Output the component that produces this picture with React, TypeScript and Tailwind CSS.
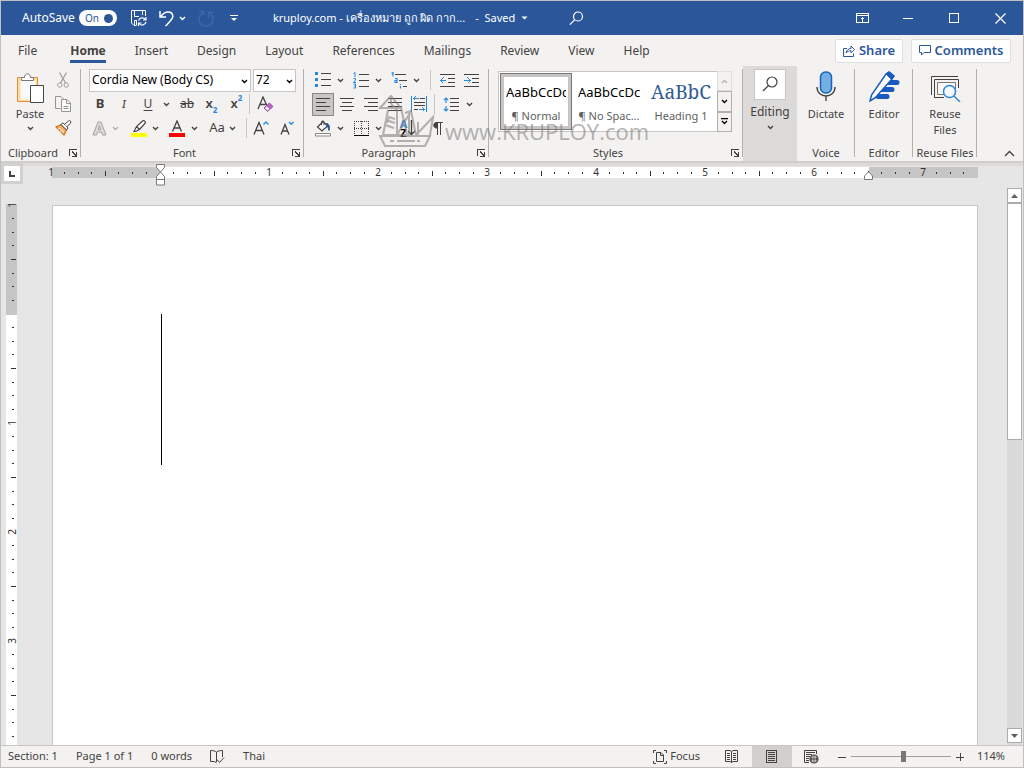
import { ReactNode } from "react";

interface IconProps {
    w: number;
    h: number;
    children: ReactNode;
    crisp?: boolean;
    className?: string;
}

function Icon({ w, h, children, crisp = false, className = "" }: IconProps) {
    return (
        <svg
            width={w}
            height={h}
            viewBox={`0 0 ${w} ${h}`}
            fill="none"
            stroke="currentColor"
            shapeRendering={crisp ? "crispEdges" : "auto"}
            className={`shrink-0 ${className}`}
            aria-hidden="true"
        >
            {children}
        </svg>
    );
}

function Chevron({ className = "" }: { className?: string }) {
    return (
        <Icon w={7} h={5} className={className}>
            <path d="M1 1l2.5 2.5L6 1" strokeWidth="1.4" />
        </Icon>
    );
}

interface ToolProps {
    label: string;
    children: ReactNode;
    className?: string;
}

function Tool({ label, children, className = "w-6" }: ToolProps) {
    return (
        <button type="button" aria-label={label} className={`flex h-6 shrink-0 items-center justify-center ${className}`}>
            {children}
        </button>
    );
}

function MoreButton({ label, className = "w-3" }: { label: string; className?: string }) {
    return (
        <Tool label={label} className={className}>
            <Chevron />
        </Tool>
    );
}

function Divider({ className = "" }: { className?: string }) {
    return <span className={`h-5 w-px shrink-0 bg-[#c8c6c4] ${className}`} />;
}

interface GroupProps {
    title: string;
    children: ReactNode;
    launcher?: boolean;
    className?: string;
}

function Group({ title, children, launcher = false, className = "" }: GroupProps) {
    return (
        <section className={`relative flex shrink-0 flex-col pt-[2px] ${className}`}>
            <div className="h-[72px]">{children}</div>
            <div className="flex h-[21px] items-end">
                <h2 className={`flex-1 whitespace-nowrap text-center leading-4 ${launcher ? "pr-1" : ""}`}>{title}</h2>
                {launcher && (
                    <button type="button" aria-label={`${title} options`} className="mb-1 mr-[3px]">
                        <Icon w={9} h={8} crisp>
                            <path d="M0.5 7V0.5H8M3 2.5l4 4M7.5 3v4.5H3" />
                        </Icon>
                    </button>
                )}
            </div>
            <span className="absolute bottom-1 right-0 top-[3px] w-px bg-[#b3b0ad]" />
        </section>
    );
}

const tabs = ["File", "Home", "Insert", "Design", "Layout", "References", "Mailings", "Review", "View", "Help"];

function TitleBar() {
    return (
        <header className="flex h-[34px] shrink-0 items-center bg-[#2b579a] text-white">
            <div className="flex items-center pl-[21px]">
                <span id="autosave" className="text-[12px]">AutoSave</span>
                <button
                    type="button"
                    role="switch"
                    aria-checked="true"
                    aria-labelledby="autosave"
                    className="ml-1 flex h-4 w-[38px] items-center justify-between rounded-full bg-white pl-[6px] pr-1 text-[10px] leading-4 text-[#2b579a]"
                >
                    On
                    <span className="size-[9px] rounded-full bg-[#2b579a]" />
                </button>
                <Tool label="Save" className="ml-3 w-5">
                    <Icon w={16} h={17}>
                        <path d="M5.5 15.5H3L0.5 13V0.5H14.5V6" />
                        <path d="M3.5 0.5V6.5H8M11.5 0.5V5M3.5 15V10.5H6M5.5 11V15" />
                        <path d="M7.5 10.5A4 4 0 0 1 14.5 9.5M15 7V10H12M15 12A4 4 0 0 1 8 13.5M7.5 16V13H10.5" strokeWidth="1.2" />
                    </Icon>
                </Tool>
                <Tool label="Undo" className="ml-2 w-5">
                    <Icon w={15} h={17}>
                        <path d="M1 1V7H7M1.5 6.5C4 3.5 6.5 2 9 2C12 2 13.8 4 13.8 6.5C13.8 9 12 10.5 6.5 16" strokeWidth="1.5" />
                    </Icon>
                </Tool>
                <MoreButton label="Undo history" />
                <Tool label="Redo" className="ml-[7px] w-5 text-[#4468a5]">
                    <Icon w={16} h={17}>
                        <path d="M5 3A7 7 0 1 0 11 3M10.5 7.5V2.5H15.5M1.5 1.5H5.5V5" strokeWidth="1.3" />
                    </Icon>
                </Tool>
                <Tool label="Customize toolbar" className="ml-2 w-5">
                    <Icon w={8} h={7}>
                        <path d="M0 0.5H8" />
                        <path d="M1 3H7L4 6Z" fill="currentColor" stroke="none" />
                    </Icon>
                </Tool>
            </div>
            <div className="ml-[29px] flex items-center whitespace-nowrap">
                <h1>kruploy.com - เครื่องหมาย ถูก ผิด กาก...</h1>
                <button type="button" className="ml-[10px] flex items-center">
                    - &nbsp;Saved
                    <Icon w={7} h={4} className="ml-[6px]">
                        <path d="M0.5 0.5H6.5L3.5 3.5Z" fill="currentColor" stroke="none" />
                    </Icon>
                </button>
                <Tool label="Search" className="ml-9 w-6">
                    <Icon w={15} h={15}>
                        <circle cx="9" cy="5.5" r="4.5" strokeWidth="1.2" />
                        <path d="M5.8 8.7L0.8 13.7" strokeWidth="1.2" />
                    </Icon>
                </Tool>
            </div>
            <div className="ml-auto flex">
                <Tool label="Ribbon display options" className="w-[46px]">
                    <Icon w={13} h={10} crisp>
                        <path d="M0.5 0.5H12.5V9.5H0.5ZM0 2.5H12M6.5 4V9M4.5 6.5L6.5 4.5L8.5 6.5" />
                    </Icon>
                </Tool>
                <Tool label="Minimize" className="w-[46px]">
                    <Icon w={10} h={1} crisp>
                        <path d="M0 0.5H10" />
                    </Icon>
                </Tool>
                <Tool label="Maximize" className="w-[46px]">
                    <Icon w={10} h={10} crisp>
                        <path d="M0.5 0.5H9.5V9.5H0.5Z" />
                    </Icon>
                </Tool>
                <Tool label="Close" className="w-[46px]">
                    <Icon w={11} h={11}>
                        <path d="M0.5 0.5L10.5 10.5M10.5 0.5L0.5 10.5" strokeWidth="1.2" />
                    </Icon>
                </Tool>
            </div>
        </header>
    );
}

function TabBar() {
    return (
        <div className="flex h-[31px] shrink-0 items-center">
            <nav className="flex items-center gap-[29px] pl-[17px] text-[12px] leading-4">
                {tabs.map((tab) => (
                    <button
                        key={tab}
                        type="button"
                        className={
                            tab === "Home"
                                ? "ml-1 border-b-3 border-[#2b579a] pb-px pt-1 font-bold"
                                : "border-b-3 border-transparent pb-px pt-1"
                        }
                    >
                        {tab}
                    </button>
                ))}
            </nav>
            <div className="ml-auto mr-3 flex gap-2 text-[13px] font-semibold text-[#2b579a]">
                <button type="button" className="flex h-6 w-[68px] items-center justify-center gap-1 rounded-xs border border-[#e1dfdd] bg-white">
                    <Icon w={12} h={12}>
                        <path d="M4 3.5H0.5V11.5H10.5V8.5M3 8C3.5 5 5.5 3.5 8 3.5V1L11.5 4.5L8 7.8V5.8C6 5.8 4.5 6.3 3 8Z" />
                    </Icon>
                    Share
                </button>
                <button type="button" className="flex h-6 w-[100px] items-center justify-center gap-1 rounded-xs border border-[#e1dfdd] bg-white">
                    <Icon w={12} h={11}>
                        <path d="M0.5 0.5H11.5V7.5H5L2.5 10V7.5H0.5Z" />
                    </Icon>
                    Comments
                </button>
            </div>
        </div>
    );
}

function ClipboardGroup() {
    return (
        <Group title="Clipboard" launcher className="w-20">
            <div className="flex pl-[10px]">
                <button type="button" className="flex w-[38px] flex-col items-center pt-[5px] leading-4">
                    <Icon w={28} h={31} className="mb-[2px]">
                        <path d="M1.5 4.5H21.5V28.5H1.5Z" fill="#fbdba0" stroke="#e0903a" />
                        <path d="M4.5 7.5H19.5V26.5H4.5Z" fill="#fafafa" stroke="none" />
                        <path d="M5.5 7.5V4.5H8.5C8.5 2 9.8 0.8 11.5 0.8C13.2 0.8 14.5 2 14.5 4.5H17.5V7.5Z" fill="#fff" stroke="#7a7774" />
                        <path d="M14.5 12.5H27.5V29.5H14.5Z" fill="#fff" stroke="#494745" />
                    </Icon>
                    Paste
                    <Chevron className="mt-1" />
                </button>
                <div className="flex flex-col">
                    <Tool label="Cut" className="w-7 text-[#a3a09d]">
                        <Icon w={12} h={16}>
                            <path d="M2.5 0.5L8.5 11M9.5 0.5L3.5 11" strokeWidth="1.3" />
                            <circle cx="2.8" cy="13" r="2.2" />
                            <circle cx="9.2" cy="13" r="2.2" />
                        </Icon>
                    </Tool>
                    <Tool label="Copy" className="w-7 text-[#979593]">
                        <Icon w={16} h={16}>
                            <path d="M5.5 12.5H0.5V0.5H6L8.5 3" />
                            <path d="M6.5 3.5H12L15.5 7V15.5H6.5ZM11.5 3.5V7.5H15.5M8.5 10.5H13.5M8.5 12.5H13.5" fill="#fafafa" />
                        </Icon>
                    </Tool>
                    <Tool label="Format Painter" className="w-7">
                        <Icon w={17} h={16}>
                            <path d="M1 7L6 4.5L11.5 10L9 15Z" fill="#f6b26b" stroke="#d5701c" strokeWidth="1.2" />
                            <path d="M3 9L5.5 8.5M5 11.5L7.5 10M7.5 13L8.5 11" stroke="#fff" />
                            <path d="M6 4.5L8 2.8L13 8L11.5 10Z" fill="#fff" />
                            <path d="M9.5 4.5L13.5 1C15 0 16.5 1.5 15.5 3L12 6.8" fill="#fff" />
                        </Icon>
                    </Tool>
                </div>
            </div>
        </Group>
    );
}

function FontGroup() {
    return (
        <Group title="Font" launcher className="w-[223px]">
            <div className="flex h-6 items-center gap-[2px] pl-2 text-[12px] text-black">
                <div className="relative">
                    <select aria-label="Font" className="h-[23px] w-[162px] appearance-none border border-[#c8c6c4] bg-white pl-[2px]">
                        <option>Cordia New (Body CS)</option>
                    </select>
                    <Chevron className="pointer-events-none absolute right-[3px] top-[10px]" />
                </div>
                <div className="relative">
                    <select aria-label="Font size" className="h-[23px] w-[43px] appearance-none border border-[#c8c6c4] bg-white pl-[2px]">
                        <option>72</option>
                    </select>
                    <Chevron className="pointer-events-none absolute right-[3px] top-[10px]" />
                </div>
            </div>
            <div className="flex h-6 items-center pl-[7px] text-[12px]">
                <Tool label="Bold">
                    <b className="text-[13px]">B</b>
                </Tool>
                <Tool label="Italic">
                    <i className="font-serif text-[13px]">I</i>
                </Tool>
                <Tool label="Underline">
                    <span className="underline underline-offset-2">U</span>
                </Tool>
                <MoreButton label="Underline style" />
                <Tool label="Strikethrough" className="ml-[3px] w-6">
                    <span className="line-through">ab</span>
                </Tool>
                <Tool label="Subscript" className="w-[25px]">
                    <span className="text-[13px] font-semibold">x</span>
                    <span className="mt-3 text-[8px] font-bold text-[#2b88d8]">2</span>
                </Tool>
                <Tool label="Superscript" className="w-[25px]">
                    <span className="text-[13px] font-semibold">x</span>
                    <span className="mb-3 text-[8px] font-bold text-[#2b88d8]">2</span>
                </Tool>
                <Divider />
                <Tool label="Clear formatting" className="ml-[3px] w-6">
                    <Icon w={17} h={17}>
                        <path d="M1 13L6 1L10.5 11M3 8.5H8.5" strokeWidth="1.3" />
                        <path d="M7 12L12.5 7L16 10.5L10.5 15.5Z" fill="#b168bf" stroke="#a650b5" />
                        <path d="M8 12L9.8 10.5L12.3 13L10.7 14.5Z" fill="#fff" stroke="none" />
                    </Icon>
                </Tool>
            </div>
            <div className="flex h-6 items-center pl-2">
                <Tool label="Text effects" className="w-5">
                    <Icon w={15} h={15}>
                        <path d="M1 14L6 1H9L14 14H10.5L9.5 11H5.5L4.5 14ZM6.3 8.5H8.7L7.5 4.5Z" fill="#dddbd9" stroke="#a3a09d" />
                    </Icon>
                </Tool>
                <Tool label="More text effects" className="w-3 text-[#b3b0ad]">
                    <Chevron />
                </Tool>
                <Tool label="Highlight" className="ml-2 w-5">
                    <Icon w={16} h={17}>
                        <path d="M0 13H16V17H0Z" fill="#ff0" stroke="none" />
                        <path d="M3 11.5L5.5 6.5L11.5 1C13 0 15 1.5 14 3.5L8.5 9.5L4.5 11.5ZM5.5 6.5L8.5 9.5" fill="#faf9f8" strokeWidth="1.2" />
                    </Icon>
                </Tool>
                <MoreButton label="Highlight colours" />
                <Tool label="Font colour" className="ml-[6px] w-5">
                    <Icon w={16} h={17}>
                        <path d="M0 13H16V17H0Z" fill="#f00" stroke="none" />
                        <path d="M3.5 11.5L8 1L12.5 11.5M5 8H11" strokeWidth="1.3" />
                    </Icon>
                </Tool>
                <MoreButton label="Font colours" className="ml-px w-3" />
                <Tool label="Change case" className="ml-2 w-[18px]">
                    <span className="text-[13px]">Aa</span>
                </Tool>
                <MoreButton label="Case options" />
                <Divider className="ml-2" />
                <Tool label="Grow font" className="ml-1 w-5">
                    <Icon w={16} h={15}>
                        <path d="M1 13.5L6 1.5L11 13.5M3 9.5H9" strokeWidth="1.3" />
                        <path d="M10.5 3.5L13 1L15.5 3.5" stroke="#2b88d8" strokeWidth="1.3" />
                    </Icon>
                </Tool>
                <Tool label="Shrink font" className="ml-[6px] w-5">
                    <Icon w={14} h={15}>
                        <path d="M1 13.5L5 3.5L9 13.5M2.5 10H7.5" strokeWidth="1.3" />
                        <path d="M9 1L11.3 3.3L13.6 1" stroke="#2b88d8" strokeWidth="1.3" />
                    </Icon>
                </Tool>
            </div>
        </Group>
    );
}

function ParagraphGroup() {
    return (
        <Group title="Paragraph" launcher className="w-[185px]">
            <div className="flex h-6 items-center pl-2">
                <Tool label="Bullets" className="w-[22px]">
                    <Icon w={16} h={16} crisp>
                        <path d="M0 0H3V3H0ZM0 6H3V9H0ZM0 12H3V15H0Z" fill="#2b88d8" stroke="none" />
                        <path d="M6 1.5H16M6 7.5H16M6 13.5H16" />
                    </Icon>
                </Tool>
                <MoreButton label="Bullet library" />
                <Tool label="Numbering" className="ml-1 w-[22px]">
                    <Icon w={16} h={17}>
                        <path d="M0.5 1.5L2 0.5V5M0.5 6.5H2.5V8L0.5 10.5H3M0.5 12H2.5V16H0.5M1 14H2.5" stroke="#2b88d8" />
                        <path d="M6 2.5H16M6 8.5H16M6 14.5H16" />
                    </Icon>
                </Tool>
                <MoreButton label="Number library" />
                <Tool label="Multilevel list" className="ml-1 w-[22px]">
                    <Icon w={16} h={17}>
                        <path d="M0.5 1.5L2 0.5V4.5M4 6.5H6V10.5H4V8.5H6M9.5 12V13M9.5 14V16.5" stroke="#2b88d8" strokeWidth="1.2" />
                        <path d="M4 2.5H15M8 8.5H16M12 14.5H16" />
                    </Icon>
                </Tool>
                <MoreButton label="List library" />
                <Divider className="ml-2" />
                <Tool label="Decrease indent" className="ml-1 w-6">
                    <Icon w={15} h={13} crisp>
                        <path d="M0 0.5H15M8 4.5H15M8 8.5H15M0 12.5H15" />
                        <path d="M0 6.5H6M3.5 3.5L0.5 6.5L3.5 9.5" stroke="#2b88d8" />
                    </Icon>
                </Tool>
                <Tool label="Increase indent">
                    <Icon w={15} h={13} crisp>
                        <path d="M0 0.5H15M8 4.5H15M8 8.5H15M0 12.5H15" />
                        <path d="M0 6.5H6M3.5 3.5L6.5 6.5L3.5 9.5" stroke="#2b88d8" />
                    </Icon>
                </Tool>
            </div>
            <div className="flex h-6 items-center pl-2">
                <button
                    type="button"
                    aria-label="Align left"
                    aria-pressed="true"
                    className="flex h-[23px] w-[22px] items-center justify-center border border-[#8a8886] bg-[#c8c6c4]"
                >
                    <Icon w={14} h={13} crisp>
                        <path d="M0 0.5H14M0 4.5H10M0 8.5H14M0 12.5H10" />
                    </Icon>
                </button>
                <Tool label="Center" className="ml-px w-6">
                    <Icon w={14} h={13} crisp>
                        <path d="M0 0.5H14M2 4.5H12M0 8.5H14M2 12.5H12" />
                    </Icon>
                </Tool>
                <Tool label="Align right">
                    <Icon w={14} h={13} crisp>
                        <path d="M0 0.5H14M4 4.5H14M0 8.5H14M4 12.5H14" />
                    </Icon>
                </Tool>
                <Tool label="Justify">
                    <Icon w={14} h={13} crisp>
                        <path d="M0 0.5H14M0 4.5H14M0 8.5H14M0 12.5H14" />
                    </Icon>
                </Tool>
                <Tool label="Distribute">
                    <Icon w={16} h={16} crisp>
                        <path d="M0.5 0V16M15.5 0V16M2 2.5H8M4.5 0.5L2.5 2.5L4.5 4.5M8 13.5H14M11.5 11.5L13.5 13.5L11.5 15.5" stroke="#2b88d8" />
                        <path d="M9 2.5H14M3 6.5H14M3 9.5H14M3 13.5H7" />
                    </Icon>
                </Tool>
                <Divider className="ml-[3px]" />
                <Tool label="Line spacing" className="ml-1 w-6">
                    <Icon w={16} h={15}>
                        <path d="M3 1V6M3 9V14M0.8 3.2L3 1L5.2 3.2M0.8 11.8L3 14L5.2 11.8" stroke="#2b88d8" strokeWidth="1.2" />
                        <path d="M7 1.5H16M7 5.5H16M7 9.5H16M7 13.5H16" />
                    </Icon>
                </Tool>
                <MoreButton label="Spacing options" />
            </div>
            <div className="flex h-6 items-center pl-2">
                <Tool label="Shading" className="w-[22px]">
                    <Icon w={17} h={17}>
                        <path d="M2.5 7L8 1.5L12.5 6L7 11Z" fill="#fafafa" strokeWidth="1.2" />
                        <path d="M6.5 5V2C6.5 0.5 9 0.5 9 2V5" />
                        <path d="M11 3.5C14 3.5 15 6 14 10.5L12.5 6Z" fill="#2b579a" stroke="#2b579a" />
                        <path d="M0.5 13.5H15.5V16H0.5Z" fill="#fff" stroke="#8a8886" />
                    </Icon>
                </Tool>
                <MoreButton label="Shading colours" />
                <Tool label="Borders" className="ml-1 w-[22px]">
                    <Icon w={15} h={15} crisp>
                        <path d="M0 0.5H15M0 7.5H15M0.5 0V14M7.5 0V14M14.5 0V14" strokeDasharray="1 1" />
                        <path d="M0 14.5H15" stroke="#000" />
                    </Icon>
                </Tool>
                <MoreButton label="Border options" />
                <Tool label="Sort" className="ml-3 w-6">
                    <span className="flex flex-col text-[11px] font-bold leading-[9px]">
                        <span className="text-[#2b88d8]">A</span>
                        <span className="text-black">Z</span>
                    </span>
                    <Icon w={9} h={16}>
                        <path d="M4.5 0V14.5M1 11L4.5 14.5L8 11" strokeWidth="1.4" />
                    </Icon>
                </Tool>
                <Tool label="Show marks" className="ml-[6px] w-6">
                    <Icon w={10} h={13}>
                        <path d="M4.5 0.5H3.5C-0.2 0.5 -0.2 6 3.5 6H4.5Z" fill="currentColor" />
                        <path d="M4.5 0V13M7.5 0V13M3 0.5H10" />
                    </Icon>
                </Tool>
            </div>
        </Group>
    );
}

function StylesGroup() {
    return (
        <Group title="Styles" launcher className="w-[254px]">
            <div className="pl-[9px] pt-[3px]">
                <div className="flex h-[61px] w-[234px] border border-[#c8c6c4] bg-white text-[#605e5c]">
                    <button
                        type="button"
                        aria-pressed="true"
                        className="m-px h-[57px] w-[72px] shrink-0 whitespace-nowrap border border-[#7a7774] bg-white outline-3 -outline-offset-4 outline-[#c8c6c4]"
                    >
                        <span className="mx-[5px] mt-[5px] block overflow-hidden text-[13px] leading-6 text-black">AaBbCcDc</span>
                        <span className="block leading-6">¶ Normal</span>
                    </button>
                    <button type="button" className="h-full w-[72px] shrink-0 whitespace-nowrap">
                        <span className="mx-[5px] mt-[5px] block overflow-hidden text-[13px] leading-6 text-black">AaBbCcDc</span>
                        <span className="block leading-6">¶ No Spac...</span>
                    </button>
                    <button type="button" className="h-full w-[72px] shrink-0 whitespace-nowrap">
                        <span className="mt-[5px] block font-['Noto_Serif','DejaVu_Serif',serif] text-[19px] leading-6 text-[#2f5c94]">
                            AaBbC
                        </span>
                        <span className="block leading-6">Heading 1</span>
                    </button>
                    <div className="-my-px -mr-px flex flex-1 flex-col bg-[#f3f2f1]">
                        <Tool label="Previous row" className="w-full flex-1 border border-[#e1dfdd] text-[#b3b0ad]">
                            <Icon w={7} h={5}>
                                <path d="M1 4l2.5-2.5L6 4" strokeWidth="1.3" />
                            </Icon>
                        </Tool>
                        <Tool label="Next row" className="w-full flex-1 border border-[#b3b0ad] text-black">
                            <Chevron />
                        </Tool>
                        <Tool label="All styles" className="w-full flex-1 border border-[#b3b0ad] text-black">
                            <Icon w={7} h={7}>
                                <path d="M0 0.5H7M1 3l2.5 2.5L6 3" strokeWidth="1.3" />
                            </Icon>
                        </Tool>
                    </div>
                </div>
            </div>
        </Group>
    );
}

function Watermark() {
    return (
        <div className="pointer-events-none absolute left-[376px] top-[29px] flex items-end gap-[10px] text-[#858381] opacity-60">
            <Icon w={58} h={54}>
                <g strokeWidth="2">
                    <path d="M2 14L14 1L24 13H2M14 1V9M14 9L20 15V40M11 15L6 40H30M30 40L24 13M9 25L18 28M8 30L17 33" />
                    <path d="M20 40L34 16L39 40M26 27L32 21V40M39 40L56 22L53 40M28 18L34 16M41 27L41 40M10 28L12 22L18 24" />
                    <path d="M3 41H53L48 51H8ZM13 46H17M20 46H38M40 46H43" />
                </g>
            </Icon>
            <span className="mb-1 whitespace-nowrap font-['Open_Sans',sans-serif] text-[22px] leading-7">www.KRUPLOY.com</span>
        </div>
    );
}

function Ribbon() {
    return (
        <div className="relative flex h-[95px] shrink-0">
            <ClipboardGroup />
            <FontGroup />
            <ParagraphGroup />
            <StylesGroup />
            <button type="button" className="flex w-[54px] shrink-0 flex-col items-center bg-[#dcdbd9] pt-[3px] text-[12px] leading-4">
                <span className="mb-1 flex h-[31px] w-8 items-center justify-center border border-[#c8c6c4] bg-white">
                    <Icon w={17} h={17}>
                        <circle cx="10" cy="6" r="5" strokeWidth="1.2" />
                        <path d="M6.5 9.5L1 15" strokeWidth="1.2" />
                    </Icon>
                </span>
                Editing
                <Chevron className="mt-[5px]" />
            </button>
            <Group title="Voice" className="w-[58px]">
                <button type="button" className="flex w-full flex-col items-center pt-[3px] leading-4">
                    <Icon w={20} h={31} className="mb-1">
                        <rect x="4.5" y="1" width="11" height="21" rx="5" fill="#71afe5" stroke="#1d62b5" strokeWidth="1.5" />
                        <path d="M1 16C1 28 19 28 19 16M10 25V30" strokeWidth="1.4" />
                    </Icon>
                    Dictate
                </button>
            </Group>
            <Group title="Editor" className="w-[58px]">
                <button type="button" className="flex w-full flex-col items-center pt-[3px] leading-4">
                    <Icon w={31} h={31} className="mb-1">
                        <path d="M15 11.5H28M13 18.5H23M9 25.5H18" stroke="#185abd" strokeWidth="5" strokeLinecap="round" />
                        <path d="M17 3L20 1L25 5L23 8L6 27L1 30L2.5 24Z" fill="#fff" stroke="#185abd" strokeWidth="1.5" />
                        <path d="M17 3L20 1L25 5L22.5 8.5Z" fill="#185abd" stroke="#185abd" />
                    </Icon>
                    Editor
                </button>
            </Group>
            <Group title="Reuse Files" className="w-[64px]">
                <button type="button" className="flex w-full flex-col items-center pt-[3px] leading-4">
                    <Icon w={31} h={31} className="mb-1">
                        <path d="M1.5 24V5.5H28" />
                        <path d="M4.5 27V8.5H28.5V17M4.5 26.5H14" />
                        <path d="M7.5 11.5H25.5V23.5H7.5Z" fill="#fafafa" stroke="#797775" />
                        <circle cx="19.5" cy="20.5" r="6" fill="#f3f9fd" stroke="#2b88d8" strokeWidth="1.5" />
                        <path d="M24 25L30 31" stroke="#2b88d8" strokeWidth="1.5" />
                    </Icon>
                    Reuse
                    <br />
                    Files
                </button>
            </Group>
            <button type="button" aria-label="Collapse ribbon" className="mb-1 ml-auto mr-2 self-end">
                <Icon w={11} h={7}>
                    <path d="M1 6l4.5-4.5L10 6" strokeWidth="1.4" />
                </Icon>
            </button>
            <Watermark />
        </div>
    );
}

// One inch on the rulers at the current zoom
const INCH = 109;

function RulerMarks({ vertical = false, count }: { vertical?: boolean; count: number }) {
    const marks = Array.from({ length: count }, (_, i) => i);
    return (
        <svg
            className={`absolute inset-0 size-full text-[#323130] ${vertical ? "" : "overflow-visible"}`}
            fill="currentColor"
            aria-hidden="true"
        >
            {marks.map((i) => {
                const at = Math.floor((i * INCH) / 8 + (vertical ? 1 : -1.2));
                if (i === 8) return null;
                if (i % 8 === 0) {
                    const n = Math.abs(i / 8 - 1);
                    return (
                        <text
                            key={i}
                            x={vertical ? 0 : at + 1}
                            y={vertical ? 0 : 9}
                            transform={vertical ? `translate(10 ${at}) rotate(-90)` : undefined}
                            textAnchor="middle"
                            fontSize="10"
                        >
                            {n}
                        </text>
                    );
                }
                const long = i % 4 === 0;
                return vertical ? (
                    <rect key={i} x={long ? 5 : 6} y={at} width={long ? 5 : 2} height="1" />
                ) : (
                    <rect key={i} x={at} y={long ? 4 : 5} width="1" height={long ? 5 : 2} />
                );
            })}
        </svg>
    );
}

function HorizontalRuler() {
    return (
        <div className="flex h-10 shrink-0">
            <div className="w-[51px] shrink-0">
                <button type="button" aria-label="Tab stop" className="flex h-[21px] w-[22px] items-center justify-center border-3 border-[#d2d1cf] bg-white">
                    <Icon w={6} h={6}>
                        <path d="M1 0V5H6" strokeWidth="2" />
                    </Icon>
                </button>
            </div>
            <div className="flex flex-1 flex-col gap-px">
                <div className="-ml-[29px] h-[3px] bg-[#dcdbd9]" />
                <div className="relative mr-[45px] flex h-[11px]">
                    <div className="w-[108px] bg-[#c6c6c6]" />
                    <div className="flex-1 bg-white" />
                    <div className="w-[109px] bg-[#c6c6c6]" />
                    <RulerMarks count={68} />
                    <Icon w={9} h={22} className="absolute -top-[3px] left-[104px]">
                        <path d="M0.5 0.5H8.5V3.5L4.5 8L8.5 12.5V15.5H0.5V12.5L4.5 8L0.5 3.5ZM0.5 15.5H8.5V21H0.5Z" fill="#fff" stroke="#7a7774" />
                    </Icon>
                    <Icon w={9} h={9} className="absolute right-[105px] top-1">
                        <path d="M4.5 0.8L8.5 5V8.5H0.5V5Z" fill="#fff" stroke="#7a7774" />
                    </Icon>
                </div>
            </div>
        </div>
    );
}

function Workspace() {
    return (
        <main className="flex min-h-0 flex-1 flex-col border-t-2 border-[#cfcecb] bg-[#e6e6e6]">
            <HorizontalRuler />
            <div className="-mt-[15px] flex min-h-0 flex-1">
                <div className="relative ml-[5px] mr-[35px] mt-4 flex w-[11px] shrink-0 flex-col overflow-hidden">
                    <div className="h-[111px] shrink-0 bg-[#c6c6c6]" />
                    <div className="flex-1 bg-white" />
                    <RulerMarks vertical count={68} />
                </div>
                <div className="mr-[29px] mt-[17px] flex-1 border border-b-0 border-[#c6c6c6] bg-white pl-[108px] pt-[108px]">
                    <div className="h-[151px] w-px bg-black" />
                </div>
                <div className="mr-px flex w-[15px] shrink-0 flex-col bg-[#dadada] pb-[2px]">
                    <button type="button" aria-label="Scroll up" className="flex h-[15px] items-center justify-center border border-[#ababab] bg-white">
                        <Icon w={7} h={4}>
                            <path d="M0 4L3.5 0L7 4Z" fill="#605e5c" stroke="none" />
                        </Icon>
                    </button>
                    <div className="h-[237px] border border-[#ababab] bg-white" />
                    <button type="button" aria-label="Scroll down" className="mt-auto flex h-[15px] items-center justify-center border border-[#ababab] bg-white">
                        <Icon w={7} h={4}>
                            <path d="M0 0L3.5 4L7 0Z" fill="#605e5c" stroke="none" />
                        </Icon>
                    </button>
                </div>
            </div>
        </main>
    );
}

function StatusBar() {
    return (
        <footer className="flex h-[22px] shrink-0 items-center border-t border-[#c6c6c6]">
            <div className="flex items-center gap-[18px] whitespace-nowrap pl-[7px]">
                <span>Section: 1</span>
                <span>Page 1 of 1</span>
                <span>0 words</span>
                <button type="button" aria-label="Proofing">
                    <Icon w={15} h={14}>
                        <path d="M6.5 12V2C5 1 3 0.5 0.5 0.5V11.5H4.5L6.5 13M6.5 2C8 1 10 0.5 12.5 0.5V7M7 9.5L9.5 12.5L14 7.5" />
                    </Icon>
                </button>
                <span>Thai</span>
            </div>
            <div className="ml-auto flex h-full items-center pr-[18px]">
                <button type="button" className="mr-3 flex items-center gap-[3px]">
                    <Icon w={14} h={14}>
                        <path d="M3 0.5H0.5V3M11 0.5H13.5V3M0.5 11V13.5H3M13.5 11V13.5H11M3.5 2.5H8L10.5 5V11.5H3.5ZM7.5 2.5V5.5H10.5" />
                    </Icon>
                    Focus
                </button>
                <Tool label="Read mode" className="w-10">
                    <Icon w={13} h={13}>
                        <path d="M6.5 1.5V12.5M0.5 0.5H5L6.5 1.5L8 0.5H12.5V11.5H8L6.5 12.5L5 11.5H0.5ZM2 3.5H5M2 5.5H5M2 7.5H5M2 9.5H5M8 3.5H11M8 5.5H11M8 7.5H11M8 9.5H11" />
                    </Icon>
                </Tool>
                <button type="button" aria-label="Print layout" aria-pressed="true" className="flex h-full w-10 items-center justify-center bg-[#d2d0ce]">
                    <Icon w={11} h={13} crisp>
                        <path d="M0.5 0.5H10.5V12.5H0.5ZM2 2.5H9M2 4.5H9M2 6.5H9M2 8.5H9M2 10.5H9" />
                    </Icon>
                </button>
                <Tool label="Web layout" className="w-10">
                    <Icon w={15} h={14}>
                        <path d="M5 12.5H0.5V0.5H12.5V4M2 2.5H11M2 4.5H8M2 6.5H6M2 8.5H5M2 10.5H5" />
                        <circle cx="10" cy="9" r="4" strokeWidth="1.2" />
                        <path d="M6 9H14M10 5V13M8 6C7.5 8 7.5 10 8 12M12 6C12.5 8 12.5 10 12 12" />
                    </Icon>
                </Tool>
                <button type="button" aria-label="Zoom out" className="ml-[6px] mr-[5px]">
                    <Icon w={8} h={8} crisp>
                        <path d="M0 4.5H8" />
                    </Icon>
                </button>
                <input
                    type="range"
                    aria-label="Zoom"
                    min={10}
                    max={210}
                    defaultValue={116}
                    className="h-px w-[100px] appearance-none bg-[#a19f9d] [&::-webkit-slider-thumb]:h-[11px] [&::-webkit-slider-thumb]:w-[5px] [&::-webkit-slider-thumb]:appearance-none [&::-webkit-slider-thumb]:bg-[#797775]"
                />
                <button type="button" aria-label="Zoom in" className="ml-[5px] mr-[13px]">
                    <Icon w={8} h={8} crisp>
                        <path d="M0 4.5H8M4.5 0V8" />
                    </Icon>
                </button>
                <span>114%</span>
            </div>
        </footer>
    );
}

export default function App() {
    return (
        <div className="flex h-screen flex-col border border-[#c0c0c0] bg-[#f3f2f1] font-['Noto_Sans','Open_Sans',sans-serif] text-[11px] text-[#444240]">
            <TitleBar />
            <TabBar />
            <Ribbon />
            <Workspace />
            <StatusBar />
        </div>
    );
}
